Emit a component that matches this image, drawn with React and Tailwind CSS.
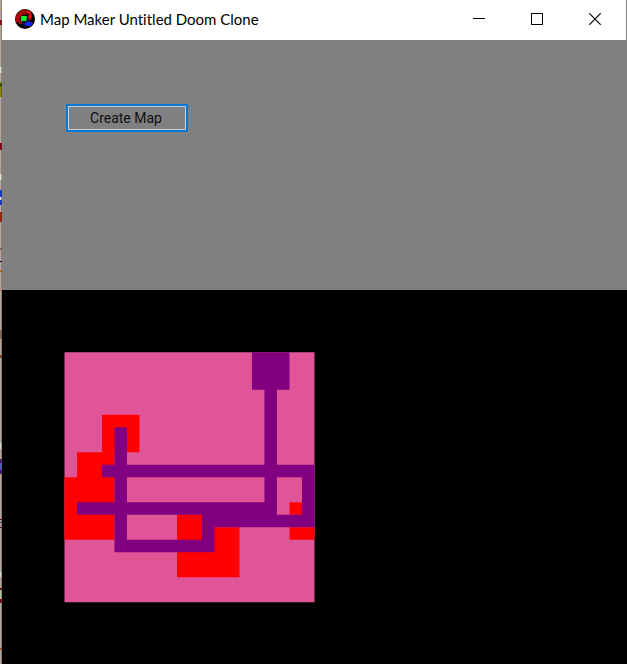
const PINK = "#e05597";
const RED = "#ff0000";
const PURPLE = "#800080";

// Each entry is [x, y, width, height] in map cells.
const rooms = [
  [3, 5, 3, 3],
  [3, 5, 1, 6],
  [1, 8, 3, 3],
  [0, 10, 4, 5],
  [9, 13, 2, 3],
  [9, 14, 5, 4],
  [18, 12, 1, 1],
  [18, 14, 2, 1],
];

const corridors = [
  [15, 0, 3, 3],
  [16, 2, 1, 11],
  [3, 9, 17, 1],
  [4, 6, 1, 10],
  [1, 12, 16, 1],
  [11, 12, 6, 2],
  [11, 13, 9, 1],
  [19, 9, 1, 5],
  [11, 13, 1, 3],
  [4, 15, 8, 1],
];

// Slivers of the desktop visible beside the window: [y, height, colour].
const slivers = [
  [8, 1, "#b8a030"],
  [20, 5, "#8a1010"],
  [67, 6, "#dfe0d4"],
  [82, 15, "#808000"],
  [84, 2, "#20400a"],
  [143, 7, "#8a0010"],
  [174, 6, "#dfe0d4"],
  [190, 15, "#1038d0"],
  [197, 3, "#c8d8e8"],
  [212, 10, "#a02008"],
  [248, 2, "#806860"],
  [261, 1, "#000060"],
  [270, 2, "#b07020"],
  [290, 1, "#f06020"],
  [330, 9, "#8d6a50"],
  [355, 3, "#7a4018"],
  [443, 6, "#d8d8cc"],
  [459, 15, "#48186a"],
  [463, 7, "#5060c0"],
  [519, 1, "#600018"],
  [522, 1, "#604080"],
  [527, 1, "#600018"],
  [572, 5, "#d8d8cc"],
  [588, 2, "#600020"],
  [590, 9, "#b8c890"],
  [599, 4, "#780020"],
  [648, 2, "#a05818"],
];

function DesktopEdge() {
  return (
    <div className="w-0.5 shrink-0 overflow-hidden bg-[#b3a69c]" aria-hidden="true">
      <svg className="block" width="2" height="664" shapeRendering="crispEdges">
        {slivers.map(([y, h, fill]) => (
          <rect key={y} x="0" y={y} width="2" height={h} fill={fill} />
        ))}
        <rect x="1" y="0" width="1" height="664" fill="#504848" opacity="0.4" />
      </svg>
    </div>
  );
}

function AppIcon() {
  return (
    <svg className="size-5 shrink-0" viewBox="0 0 20 20" aria-hidden="true">
      <circle cx="10" cy="10" r="10" fill="#080000" />
      <path d="M3 4Q6 0 11 0L10 4L6 7L4 14L1 13Q-1 8 3 4Z" fill="#a80808" />
      <path d="M12 1L16 3L17 8L15 12L13 9L14 5L10 4Z" fill="#e01010" />
      <path d="M7 4H11V6H7ZM4 11H7V15H4Z" fill="#801010" />
      <rect x="6" y="7" width="6" height="5" rx="1" fill="#10f030" />
      <path d="M10 14L13 12L18 14L16 17H10Z" fill="#0828f0" />
      <path d="M12 9V14M8 12V15H11" stroke="#102090" fill="none" />
    </svg>
  );
}

function CaptionButton({ label, children }) {
  return (
    <button type="button" aria-label={label} className="flex h-full w-[58px] items-center justify-center">
      <svg width="12" height="12" viewBox="0 0 12 12" fill="none" stroke="#000">
        {children}
      </svg>
    </button>
  );
}

function TitleBar() {
  return (
    <header className="flex h-10 shrink-0 items-center border-r border-[#888] bg-white pr-0.5 pb-0.5 pl-[13px]">
      <AppIcon />
      <h1 className="ml-[5px] flex-1 whitespace-nowrap font-['Lato',sans-serif] text-[15px] leading-5 text-black [font-variant-ligatures:none]">
        Map Maker Untitled Doom Clone
      </h1>
      <div className="flex h-full">
        <CaptionButton label="Minimize">
          <path d="M0 5.5H12" shapeRendering="crispEdges" />
        </CaptionButton>
        <CaptionButton label="Maximize">
          <rect x="0.5" y="0.5" width="11" height="11" shapeRendering="crispEdges" />
        </CaptionButton>
        <CaptionButton label="Close">
          <path d="M0.3 0.3L11.7 11.7M11.7 0.3L0.3 11.7" strokeWidth="1.2" />
        </CaptionButton>
      </div>
    </header>
  );
}

// Draws all cells as one path, so that no seams show between neighbours.
function Cells({ cells, fill }) {
  const d = cells.map(([x, y, w, h]) => `M${x} ${y}h${w}v${h}h${-w}z`).join("");
  return <path d={d} fill={fill} />;
}

function MapView() {
  return (
    <svg className="block size-[251px]" viewBox="-0.04 -0.02 20.08 20.08" role="img" aria-label="Generated map">
      <rect width="20" height="20" fill={PINK} />
      <Cells cells={rooms} fill={RED} />
      <Cells cells={corridors} fill={PURPLE} />
    </svg>
  );
}

export default function App() {
  return (
    <div className="flex min-h-screen bg-black">
      <DesktopEdge />
      <div className="flex min-w-0 flex-1 flex-col">
        <TitleBar />
        <section className="h-[250px] shrink-0 bg-[#808080] px-16 pt-16">
          <button
            type="button"
            className="flex h-7 w-[122px] items-center justify-center border-2 border-[#0078d7] pr-0.5 font-['Roboto',sans-serif] text-sm text-[#101010] inset-ring inset-ring-[#d0d0d0]"
          >
            Create Map
          </button>
        </section>
        <main className="flex-1 bg-black px-[62px] pt-[62px]">
          <MapView />
        </main>
      </div>
    </div>
  );
}
